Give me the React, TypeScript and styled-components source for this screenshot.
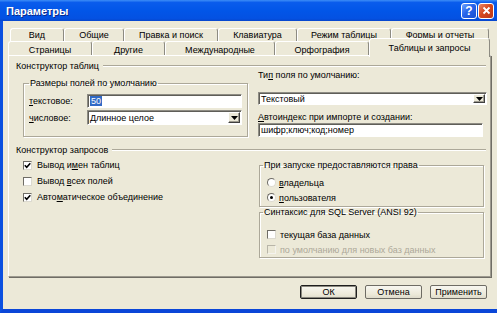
import React from 'react';
import styled, { createGlobalStyle, css } from 'styled-components';

const GlobalStyle = createGlobalStyle`
  html, body {
    margin: 0;
    padding: 0;
    background: #ECE9D8;
  }
  body {
    font-family: "Liberation Sans", Arial, sans-serif;
    font-size: 9px;
    color: #000;
  }
  * {
    box-sizing: border-box;
  }
`;

const backTabs = [
  { label: 'Вид', w: 54 },
  { label: 'Общие', w: 60 },
  { label: 'Правка и поиск', w: 94 },
  { label: 'Клавиатура', w: 79 },
  { label: 'Режим таблицы', w: 94 },
  { label: 'Формы и отчеты', w: 98 },
];

const frontTabs = [
  { label: 'Страницы', w: 84 },
  { label: 'Другие', w: 73 },
  { label: 'Международные', w: 110 },
  { label: 'Орфография', w: 94 },
  { label: 'Таблицы и запросы', w: 121, active: true },
];

const Window = styled.div`
  width: 497px;
  height: 313px;
  display: flex;
  flex-direction: column;
  background: #ECE9D8;
  overflow: hidden;
`;

const TitleBar = styled.div`
  height: 21px;
  flex: none;
  display: flex;
  align-items: center;
  justify-content: space-between;
  padding: 0 3px 0 6px;
  background: linear-gradient(180deg, #3D8DF7 0%, #0A5CEC 12%, #0256E8 50%, #0451E2 88%, #0746CC 100%);
`;

const TitleText = styled.div`
  color: #fff;
  font: bold 11px "Liberation Sans", Arial, sans-serif;
  text-shadow: 1px 1px 0 #0A2A8C;
`;

const TitleButtons = styled.div`
  display: flex;
  gap: 1px;
`;

const TitleButton = styled.div<{ $kind: 'help' | 'close' }>`
  width: 16px;
  height: 16px;
  border: 1px solid #fff;
  border-radius: 3px;
  display: flex;
  align-items: center;
  justify-content: center;
  color: #fff;
  font: bold 12px "Liberation Sans", Arial, sans-serif;
  background: ${(p) =>
    p.$kind === 'close'
      ? 'linear-gradient(135deg, #E9876A 0%, #D5491F 45%, #B9381A 100%)'
      : 'linear-gradient(135deg, #6FA3FF 0%, #2764EA 45%, #1A4FD0 100%)'};
`;

const Frame = styled.div`
  flex: 1;
  display: flex;
  flex-direction: column;
  border-left: 3px solid #0B50E0;
  border-bottom: 4px solid #0A46D8;
  padding: 7px 6px 0 5px;
`;

const TabRow = styled.div<{ $indent: number; $h: number }>`
  display: flex;
  height: ${(p) => p.$h}px;
  margin-left: ${(p) => p.$indent}px;
`;

const Tab = styled.div<{ $w: number; $pt: number; $active?: boolean }>`
  flex: none;
  width: ${(p) => p.$w}px;
  height: 100%;
  display: flex;
  justify-content: center;
  padding-top: ${(p) => p.$pt}px;
  line-height: 11px;
  white-space: nowrap;
  background: #ECE9D8;
  border-top: 1px solid #fff;
  border-left: 1px solid #fff;
  border-right: 1px solid #8D8B82;
  border-radius: 3px 3px 0 0;
  ${(p) =>
    p.$active &&
    css`
      position: relative;
      z-index: 2;
      height: 19px;
      margin-top: -3px;
      padding-top: 4px;
    `}
`;

const Panel = styled.div`
  height: 222px;
  flex: none;
  padding: 5px 4px 0 7px;
  border: 1px solid;
  border-color: #fff #9D9A8F #9D9A8F #fff;
  box-shadow: 1px 1px 0 #6F6D65;
  background: #ECE9D8;
`;

const SectionHeader = styled.div<{ $mt?: number }>`
  display: flex;
  align-items: center;
  height: 10px;
  line-height: 10px;
  margin-top: ${(p) => p.$mt ?? 0}px;
  white-space: nowrap;
`;

const HeaderRule = styled.div`
  flex: 1;
  height: 2px;
  margin-left: 4px;
  border-top: 1px solid #ACA899;
  border-bottom: 1px solid #fff;
`;

const Columns = styled.div`
  display: flex;
  align-items: flex-start;
`;

const Column = styled.div<{ $w: number; $ml: number; $mt: number }>`
  width: ${(p) => p.$w}px;
  margin-left: ${(p) => p.$ml}px;
  margin-top: ${(p) => p.$mt}px;
  display: flex;
  flex-direction: column;
`;

const Group = styled.fieldset<{ $pt: number; $pb: number; $pl: number }>`
  margin: 0;
  min-width: 0;
  padding: ${(p) => `${p.$pt}px 5px ${p.$pb}px ${p.$pl}px`};
  border: 1px solid #ACA899;
  box-shadow: 1px 1px 0 #fff, inset 1px 1px 0 #fff;
`;

const GroupLegend = styled.legend`
  padding: 0 1px;
  line-height: 10px;
  white-space: nowrap;
`;

const FieldRow = styled.div<{ $mt?: number }>`
  display: flex;
  align-items: center;
  margin-top: ${(p) => p.$mt ?? 0}px;
`;

const FieldLabel = styled.div<{ $w: number }>`
  width: ${(p) => p.$w}px;
  flex: none;
  white-space: nowrap;
`;

const Caption = styled.div<{ $mt: number }>`
  margin-top: ${(p) => p.$mt}px;
  line-height: 10px;
  white-space: nowrap;
`;

const sunken = css`
  border: 1px solid;
  border-color: #8E8C84 #fff #fff #8E8C84;
  box-shadow: inset 1px 1px 0 #5F5E58;
  background: #fff;
`;

const TextBox = styled.div<{ $w: number; $h: number; $mt?: number }>`
  ${sunken};
  width: ${(p) => p.$w}px;
  height: ${(p) => p.$h}px;
  margin-top: ${(p) => p.$mt ?? 0}px;
  display: flex;
  align-items: center;
  padding-left: 2px;
  white-space: nowrap;
`;

const Selected = styled.span`
  background: #316AC5;
  color: #fff;
  padding: 0 1px;
  line-height: 10px;
`;

const SelectBox = styled(TextBox)`
  justify-content: space-between;
  padding-right: 1px;
`;

const DropButton = styled.div`
  width: 12px;
  height: calc(100% - 2px);
  display: flex;
  align-items: center;
  justify-content: center;
  background: #ECE9D8;
  border: 1px solid;
  border-color: #fff #404040 #404040 #fff;
  box-shadow: inset -1px -1px 0 #9D9A8F;
`;

const OptionList = styled.div<{ $ml: number }>`
  display: flex;
  flex-direction: column;
  margin-left: ${(p) => p.$ml}px;
`;

const CheckRow = styled.div<{ $h: number; $disabled?: boolean; $gap: number }>`
  display: flex;
  align-items: center;
  height: ${(p) => p.$h}px;
  gap: ${(p) => p.$gap}px;
  white-space: nowrap;
  color: ${(p) => (p.$disabled ? '#ACA899' : '#000')};
`;

const CheckBox = styled.div<{ $disabled?: boolean }>`
  width: 9px;
  height: 9px;
  flex: none;
  display: flex;
  align-items: center;
  justify-content: center;
  border: 1px solid;
  border-color: #6F6D66 #DCDAD0 #DCDAD0 #6F6D66;
  background: ${(p) => (p.$disabled ? '#ECE9D8' : '#fff')};
  ${(p) => p.$disabled && 'border-color: #B8B5A8 #F4F3EE #F4F3EE #B8B5A8;'}
`;

const Radio = styled.div`
  width: 9px;
  height: 9px;
  flex: none;
  border-radius: 50%;
  display: flex;
  align-items: center;
  justify-content: center;
  border: 1px solid;
  border-color: #6F6D66 #DCDAD0 #DCDAD0 #6F6D66;
  background: #fff;
`;

const RadioDot = styled.div`
  width: 3px;
  height: 3px;
  border-radius: 50%;
  background: #000;
`;

const ButtonBar = styled.div`
  display: flex;
  justify-content: flex-end;
  gap: 8px;
  margin-top: 8px;
  padding-right: 4px;
`;

const DialogButton = styled.div<{ $default?: boolean }>`
  width: 57px;
  height: 14px;
  display: flex;
  align-items: center;
  justify-content: center;
  border-radius: 2px;
  border: 1px solid ${(p) => (p.$default ? '#1E1E1E' : '#6E6C64')};
  background: linear-gradient(180deg, #F7F6F0 0%, #ECE9D8 70%, #DEDBCB 100%);
  ${(p) => p.$default && 'box-shadow: inset 0 0 0 1px #8A887E;'}
  white-space: nowrap;
`;

const Check = () => (
  <svg width="7" height="7" viewBox="0 0 7 7">
    <path d="M0.8 3.2 L2.7 5.2 L6.3 1.2" stroke="#000" strokeWidth="1.6" fill="none" />
  </svg>
);

const Arrow = () => (
  <svg width="7" height="4" viewBox="0 0 7 4">
    <path d="M0 0 H7 L3.5 4 Z" fill="#000" />
  </svg>
);

export default function App() {
  return (
    <>
      <GlobalStyle />
      <Window>
        <TitleBar>
          <TitleText>Параметры</TitleText>
          <TitleButtons>
            <TitleButton $kind="help">?</TitleButton>
            <TitleButton $kind="close">
              <svg width="9" height="9" viewBox="0 0 9 9">
                <path d="M1.5 1.5 L7.5 7.5 M7.5 1.5 L1.5 7.5" stroke="#fff" strokeWidth="1.8" />
              </svg>
            </TitleButton>
          </TitleButtons>
        </TitleBar>

        <Frame>
          <TabRow $indent={2} $h={13}>
            {backTabs.map((t) => (
              <Tab key={t.label} $w={t.w} $pt={1}>
                {t.label}
              </Tab>
            ))}
          </TabRow>
          <TabRow $indent={0} $h={14}>
            {frontTabs.map((t) => (
              <Tab key={t.label} $w={t.w} $pt={3} $active={t.active}>
                {t.label}
              </Tab>
            ))}
          </TabRow>

          <Panel>
            <SectionHeader>
              Конструктор таблиц
              <HeaderRule />
            </SectionHeader>
            <Columns>
              <Column $w={225} $ml={7} $mt={7}>
                <Group $pt={6} $pb={11} $pl={5}>
                  <GroupLegend>Размеры полей по умолчанию</GroupLegend>
                  <FieldRow>
                    <FieldLabel $w={58}>
                      <u>т</u>екстовое:
                    </FieldLabel>
                    <TextBox $w={155} $h={14}>
                      <Selected>50</Selected>
                    </TextBox>
                  </FieldRow>
                  <FieldRow $mt={2}>
                    <FieldLabel $w={58}>
                      <u>ч</u>исловое:
                    </FieldLabel>
                    <SelectBox $w={155} $h={15}>
                      Длинное целое
                      <DropButton>
                        <Arrow />
                      </DropButton>
                    </SelectBox>
                  </FieldRow>
                </Group>
              </Column>
              <Column $w={229} $ml={10} $mt={-1}>
                <Caption $mt={0}>
                  Ти<u>п</u> поля по умолчанию:
                </Caption>
                <SelectBox $w={229} $h={13} $mt={12}>
                  Текстовый
                  <DropButton>
                    <Arrow />
                  </DropButton>
                </SelectBox>
                <Caption $mt={7}>
                  <u>А</u>втоиндекс при импорте и создании:
                </Caption>
                <TextBox $w={225} $h={14} $mt={1}>
                  шифр;ключ;код;номер
                </TextBox>
              </Column>
            </Columns>

            <SectionHeader $mt={8}>
              Конструктор запросов
              <HeaderRule />
            </SectionHeader>
            <Columns>
              <Column $w={229} $ml={7} $mt={2}>
                <CheckRow $h={16} $gap={5}>
                  <CheckBox>
                    <Check />
                  </CheckBox>
                  <span>
                    Вывод и<u>м</u>ен таблиц
                  </span>
                </CheckRow>
                <CheckRow $h={16} $gap={5}>
                  <CheckBox />
                  <span>
                    Вывод <u>в</u>сех полей
                  </span>
                </CheckRow>
                <CheckRow $h={16} $gap={5}>
                  <CheckBox>
                    <Check />
                  </CheckBox>
                  <span>
                    Авто<u>м</u>атическое объединение
                  </span>
                </CheckRow>
              </Column>
              <Column $w={225} $ml={7} $mt={5}>
                <Group $pt={5} $pb={1} $pl={3}>
                  <GroupLegend>При запуске предоставляются права</GroupLegend>
                  <OptionList $ml={4}>
                    <CheckRow $h={15} $gap={3}>
                      <Radio />
                      <span>
                        <u>в</u>ладельца
                      </span>
                    </CheckRow>
                    <CheckRow $h={15} $gap={3}>
                      <Radio>
                        <RadioDot />
                      </Radio>
                      <span>
                        <u>п</u>ользователя
                      </span>
                    </CheckRow>
                  </OptionList>
                </Group>
                <Group $pt={10} $pb={0} $pl={3}>
                  <GroupLegend>Синтаксис для SQL Server (ANSI 92)</GroupLegend>
                  <OptionList $ml={4}>
                    <CheckRow $h={15} $gap={4}>
                      <CheckBox />
                      <span>текущая база данных</span>
                    </CheckRow>
                    <CheckRow $h={15} $gap={4} $disabled>
                      <CheckBox $disabled />
                      <span>по умолчанию для новых баз данных</span>
                    </CheckRow>
                  </OptionList>
                </Group>
              </Column>
            </Columns>
          </Panel>

          <ButtonBar>
            <DialogButton $default>ОК</DialogButton>
            <DialogButton>Отмена</DialogButton>
            <DialogButton>Применить</DialogButton>
          </ButtonBar>
        </Frame>
      </Window>
    </>
  );
}
